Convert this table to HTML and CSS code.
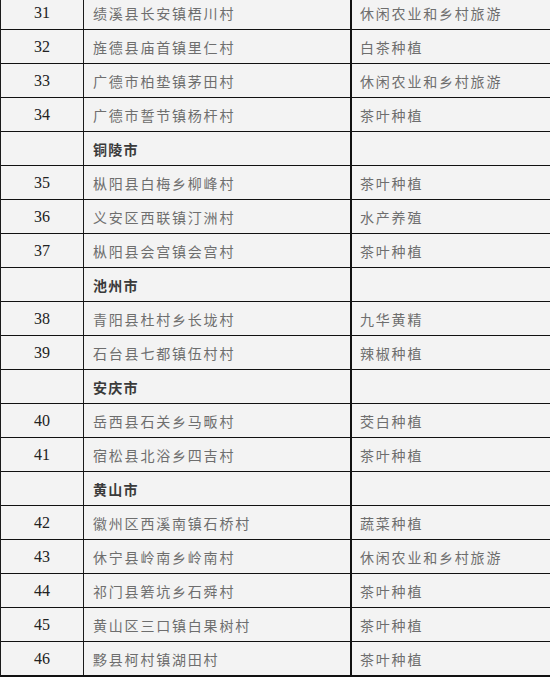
FILE: index.html
```html
<!DOCTYPE html>
<html lang="zh">
<head>
<meta charset="utf-8">
<title>表格</title>
<link rel="stylesheet" href="styles.css">
</head>
<body>
<div class="table">
  <div class="row"><div class="num">31</div><div class="name">绩溪县长安镇梧川村</div><div class="type">休闲农业和乡村旅游</div></div>
  <div class="row"><div class="num">32</div><div class="name">旌德县庙首镇里仁村</div><div class="type">白茶种植</div></div>
  <div class="row"><div class="num">33</div><div class="name">广德市柏垫镇茅田村</div><div class="type">休闲农业和乡村旅游</div></div>
  <div class="row"><div class="num">34</div><div class="name">广德市誓节镇杨杆村</div><div class="type">茶叶种植</div></div>
  <div class="row"><div class="num"></div><div class="name city">铜陵市</div><div class="type"></div></div>
  <div class="row"><div class="num">35</div><div class="name">枞阳县白梅乡柳峰村</div><div class="type">茶叶种植</div></div>
  <div class="row"><div class="num">36</div><div class="name">义安区西联镇汀洲村</div><div class="type">水产养殖</div></div>
  <div class="row"><div class="num">37</div><div class="name">枞阳县会宫镇会宫村</div><div class="type">茶叶种植</div></div>
  <div class="row"><div class="num"></div><div class="name city">池州市</div><div class="type"></div></div>
  <div class="row"><div class="num">38</div><div class="name">青阳县杜村乡长垅村</div><div class="type">九华黄精</div></div>
  <div class="row"><div class="num">39</div><div class="name">石台县七都镇伍村村</div><div class="type">辣椒种植</div></div>
  <div class="row"><div class="num"></div><div class="name city">安庆市</div><div class="type"></div></div>
  <div class="row"><div class="num">40</div><div class="name">岳西县石关乡马畈村</div><div class="type">茭白种植</div></div>
  <div class="row"><div class="num">41</div><div class="name">宿松县北浴乡四吉村</div><div class="type">茶叶种植</div></div>
  <div class="row"><div class="num"></div><div class="name city">黄山市</div><div class="type"></div></div>
  <div class="row"><div class="num">42</div><div class="name">徽州区西溪南镇石桥村</div><div class="type">蔬菜种植</div></div>
  <div class="row"><div class="num">43</div><div class="name">休宁县岭南乡岭南村</div><div class="type">休闲农业和乡村旅游</div></div>
  <div class="row"><div class="num">44</div><div class="name">祁门县箬坑乡石舜村</div><div class="type">茶叶种植</div></div>
  <div class="row"><div class="num">45</div><div class="name">黄山区三口镇白果树村</div><div class="type">茶叶种植</div></div>
  <div class="row"><div class="num">46</div><div class="name">黟县柯村镇湖田村</div><div class="type">茶叶种植</div></div>
</div>
</body>
</html>
```
FILE: styles.css
```css
html, body {
  margin: 0;
  padding: 0;
  background: #ffffff;
}

.table {
  width: 550px;
  margin-top: -4px;
  border-left: 1px solid #1a1a1a;
  border-bottom: 2px solid #111;
  background: #f3f3f3;
  box-sizing: border-box;
}

.row {
  display: grid;
  grid-template-columns: 83px 268px 198px;
  height: 34px;
  box-sizing: border-box;
  border-bottom: 1px solid #111;
}

.row:last-child {
  border-bottom: none;
  height: 33px;
}

.num, .name, .type {
  display: flex;
  align-items: center;
  box-sizing: border-box;
  white-space: nowrap;
}

.num {
  justify-content: center;
  border-right: 1px solid #1a1a1a;
  font-family: "Liberation Serif", "Times New Roman", serif;
  font-size: 16px;
  color: #222;
  padding-top: 1px;
}

.name {
  border-right: 2px solid #111;
  padding-left: 9px;
  font-family: "Noto Sans CJK SC", "Noto Sans", sans-serif;
  font-size: 14px;
  letter-spacing: 1.8px;
  color: #6e6e6e;
}

.name.city {
  font-weight: bold;
  color: #3a3a3a;
  letter-spacing: 1.2px;
}

.type {
  padding-left: 8px;
  font-family: "Noto Sans CJK SC", "Noto Sans", sans-serif;
  font-size: 14px;
  letter-spacing: 1.8px;
  color: #6e6e6e;
}
```
